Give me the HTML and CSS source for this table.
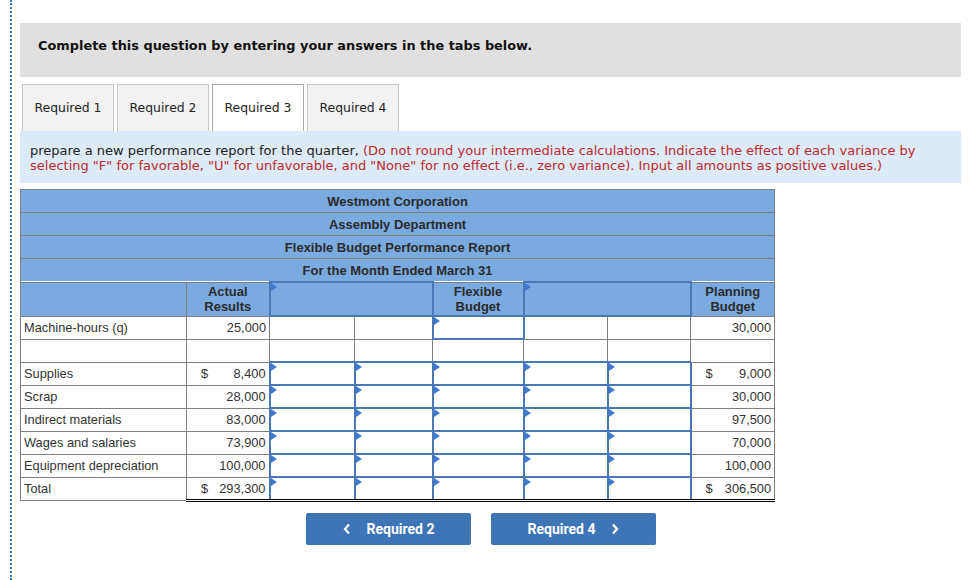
FILE: index.html
```html
<!DOCTYPE html>
<html>
<head>
<meta charset="utf-8">
<link rel="stylesheet" href="styles.css">
</head>
<body>
<div class="frame">
  <div class="banner">Complete this question by entering your answers in the tabs below.</div>
  <div class="tabs">
    <div class="tab">Required 1</div>
    <div class="tab">Required 2</div>
    <div class="tab active">Required 3</div>
    <div class="tab">Required 4</div>
  </div>
  <div class="instr">
    <div class="line">prepare a new performance report for the quarter, <span class="red">(Do not round your intermediate calculations. Indicate the effect of each variance by</span></div>
    <div class="line red">selecting "F" for favorable, "U" for unfavorable, and "None" for no effect (i.e., zero variance). Input all amounts as positive values.)</div>
  </div>

  <table class="rep">
    <colgroup>
      <col class="c0"><col class="c1"><col class="c2"><col class="c3"><col class="c4"><col class="c5"><col class="c6"><col class="c7">
    </colgroup>
    <tr class="hd"><td colspan="8">Westmont Corporation</td></tr>
    <tr class="hd"><td colspan="8">Assembly Department</td></tr>
    <tr class="hd"><td colspan="8">Flexible Budget Performance Report</td></tr>
    <tr class="hd"><td colspan="8">For the Month Ended March 31</td></tr>
    <tr class="ch">
      <td></td>
      <td>Actual<br>Results</td>
      <td colspan="2" class="in"></td>
      <td>Flexible<br>Budget</td>
      <td colspan="2" class="in"></td>
      <td>Planning<br>Budget</td>
    </tr>
    <tr class="r">
      <td class="lbl">Machine-hours (q)</td>
      <td class="num">25,000</td>
      <td></td><td></td>
      <td class="in"></td>
      <td></td><td></td>
      <td class="num">30,000</td>
    </tr>
    <tr class="r empty">
      <td></td><td></td><td></td><td></td><td></td><td></td><td></td><td></td>
    </tr>
    <tr class="r">
      <td class="lbl">Supplies</td>
      <td class="num"><span class="cur">$</span>8,400</td>
      <td class="in"></td><td class="in"></td><td class="in"></td><td class="in"></td><td class="in"></td>
      <td class="num"><span class="cur">$</span>9,000</td>
    </tr>
    <tr class="r">
      <td class="lbl">Scrap</td>
      <td class="num">28,000</td>
      <td class="in"></td><td class="in"></td><td class="in"></td><td class="in"></td><td class="in"></td>
      <td class="num">30,000</td>
    </tr>
    <tr class="r">
      <td class="lbl">Indirect materials</td>
      <td class="num">83,000</td>
      <td class="in"></td><td class="in"></td><td class="in"></td><td class="in"></td><td class="in"></td>
      <td class="num">97,500</td>
    </tr>
    <tr class="r">
      <td class="lbl">Wages and salaries</td>
      <td class="num">73,900</td>
      <td class="in"></td><td class="in"></td><td class="in"></td><td class="in"></td><td class="in"></td>
      <td class="num">70,000</td>
    </tr>
    <tr class="r">
      <td class="lbl">Equipment depreciation</td>
      <td class="num">100,000</td>
      <td class="in"></td><td class="in"></td><td class="in"></td><td class="in"></td><td class="in"></td>
      <td class="num">100,000</td>
    </tr>
    <tr class="r tot">
      <td class="lbl">Total</td>
      <td class="num"><span class="cur2">$</span>293,300</td>
      <td class="in"></td><td class="in"></td><td class="in"></td><td class="in"></td><td class="in"></td>
      <td class="num"><span class="cur2">$</span>306,500</td>
    </tr>
  </table>

  <div class="nav">
    <div class="btn"><svg class="chev" width="8" height="12" viewBox="0 0 8 12"><polyline points="6,1.5 2,6 6,10.5" fill="none" stroke="#fff" stroke-width="2.2"/></svg>Required 2</div>
    <div class="btn">Required 4<svg class="chev r" width="8" height="12" viewBox="0 0 8 12"><polyline points="2,1.5 6,6 2,10.5" fill="none" stroke="#fff" stroke-width="2.2"/></svg></div>
  </div>
</div>
</body>
</html>
```
FILE: styles.css
```css
html, body {
  margin: 0;
  padding: 0;
  background: #fff;
}
body {
  width: 979px;
  height: 580px;
  overflow: hidden;
}
.frame {
  margin-left: 10px;
  border-left: 2px dotted #3d7cc9;
  padding: 23px 18px 0 8px;
  height: 580px;
  box-sizing: border-box;
}
.banner {
  height: 54px;
  background: #e0e0e0;
  font-family: "DejaVu Sans", Verdana, sans-serif;
  font-weight: bold;
  font-size: 12.9px;
  color: #111;
  line-height: 46px;
  padding-left: 18px;
}
.tabs {
  display: flex;
  gap: 3px;
  margin-top: 7px;
  padding-left: 2px;
  height: 47px;
}
.tab {
  width: 92px;
  height: 47px;
  box-sizing: border-box;
  border: 1px solid #c8c8c8;
  border-bottom: none;
  background: #f2f2f2;
  font-family: "DejaVu Sans", Verdana, sans-serif;
  font-size: 12.4px;
  color: #222;
  text-align: center;
  line-height: 46px;
}
.tab.active {
  background: #fff;
  border-color: #a8a8a8;
}
.instr {
  background: #dcebf7;
  height: 52px;
  box-sizing: border-box;
  padding: 12px 10px 0 10px;
  font-family: "DejaVu Sans", Verdana, sans-serif;
  font-size: 13px;
  line-height: 15px;
  color: #222;
}
.line {
  white-space: nowrap;
  height: 15px;
}
.red { color: #c0282d; }

table.rep {
  margin-top: 6px;
  border-collapse: collapse;
  table-layout: fixed;
  width: 755px;
  font-family: "Liberation Sans", Arial, sans-serif;
  font-size: 12.8px;
  color: #333;
}
col.c0 { width: 166px; }
col.c1 { width: 83px; }
col.c2 { width: 85px; }
col.c3 { width: 78px; }
col.c4 { width: 91px; }
col.c5 { width: 84px; }
col.c6 { width: 83px; }
col.c7 { width: 84px; }
table.rep td {
  border: 1px solid #808080;
  padding: 0 3px;
  position: relative;
}
tr.hd td {
  background: #7aaae0;
  height: 22px;
  text-align: center;
  font-weight: bold;
  color: #2b2b2b;
  font-size: 13px;
  padding: 0;
}
tr.ch td {
  background: #7aaae0;
  height: 32px;
  text-align: center;
  font-weight: bold;
  color: #2b2b2b;
  font-size: 13px;
  line-height: 15px;
  padding: 0;
}
tr.r td {
  height: 21px;
  background: #fff;
}
td.lbl { text-align: left; }
td.num { text-align: right; }
.cur {
  float: left;
  padding-left: 11px;
}
.cur2 {
  float: left;
  padding-left: 11px;
}
table.rep td.in {
  border: 2px solid #4a78b6;
}
td.in::before {
  content: "";
  position: absolute;
  left: 0;
  top: 0;
  border-top: 4px solid transparent;
  border-bottom: 4px solid transparent;
  border-left: 6px solid #3f7ad0;
}
tr.tot td {
  border-top: 1px solid #000;
}
tr.tot td.num {
  border-bottom: 3px double #000;
}
table.rep tr.tot td.in {
  border-top: 2px solid #222;
  border-bottom: 3px double #000;
}

.nav {
  display: flex;
  gap: 20px;
  margin-top: 11px;
  margin-left: 286px;
}
.btn {
  width: 165px;
  height: 32px;
  background: #3d75b7;
  border-radius: 2px;
  color: #fff;
  font-family: Roboto, "Liberation Sans", sans-serif;
  font-weight: bold;
  font-size: 14px;
  display: flex;
  align-items: center;
  justify-content: center;
}
.chev {
  margin-right: 16px;
}
.chev.r {
  margin-right: 0;
  margin-left: 16px;
}
```
